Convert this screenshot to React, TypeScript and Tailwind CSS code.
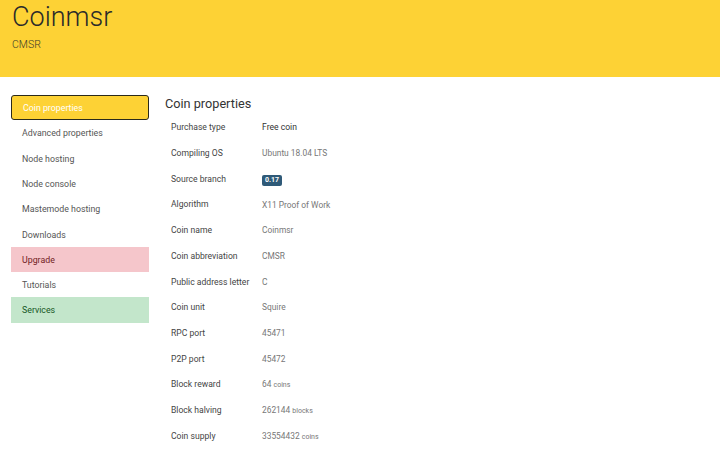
import React from "react";

const nav = [
  { t: "Coin properties", k: "active" },
  { t: "Advanced properties" },
  { t: "Node hosting" },
  { t: "Node console" },
  { t: "Mastemode hosting" },
  { t: "Downloads" },
  { t: "Upgrade", k: "danger" },
  { t: "Tutorials" },
  { t: "Services", k: "success" },
];

type Row = { l: string; v: React.ReactNode; dark?: boolean };

const rows: Row[] = [
  { l: "Purchase type", v: "Free coin", dark: true },
  { l: "Compiling OS", v: "Ubuntu 18.04 LTS" },
  {
    l: "Source branch",
    v: (
      <span className="inline-flex h-[11px] items-center rounded-[2px] bg-[#2f5a78] px-[3px] text-[7px] font-bold leading-none text-white">
        0.17
      </span>
    ),
  },
  { l: "Algorithm", v: "X11 Proof of Work" },
  { l: "Coin name", v: "Coinmsr" },
  { l: "Coin abbreviation", v: "CMSR" },
  { l: "Public address letter", v: "C" },
  { l: "Coin unit", v: "Squire" },
  { l: "RPC port", v: "45471" },
  { l: "P2P port", v: "45472" },
  { l: "Block reward", v: <>64 <span className="text-[7px]">coins</span></> },
  { l: "Block halving", v: <>262144 <span className="text-[7px]">blocks</span></> },
  { l: "Coin supply", v: <>33554432 <span className="text-[7px]">coins</span></> },
];

export default function App() {
  return (
    <div
      className="h-[450px] w-[720px] overflow-hidden bg-white"
      style={{ fontFamily: "Roboto, 'Noto Sans', sans-serif" }}
    >
      <header className="h-[77px] bg-[#fdd235] pl-[12px] pt-[1px]">
        <h1 className="text-[27px] font-light leading-[32px] text-[#2a2a2a]">Coinmsr</h1>
        <div className="mt-[6px] text-[10.5px] font-light leading-[12px] text-[#3a3a2a]">CMSR</div>
      </header>
      <div className="flex">
        <nav className="ml-[11px] mt-[18px] w-[138px]">
          {nav.map((n) => {
            let cls = "text-[#555]";
            if (n.k === "active")
              cls = "bg-[#fdd235] text-white border-[1.5px] border-[#2a2a1a] rounded-[3px]";
            if (n.k === "danger") cls = "bg-[#f5c6cb] text-[#721c24]";
            if (n.k === "success") cls = "bg-[#c3e6cb] text-[#155724]";
            return (
              <div
                key={n.t}
                className={`flex h-[25.3px] items-center pl-[11px] pt-[2px] text-[8.8px] ${cls}`}
              >
                {n.t}
              </div>
            );
          })}
        </nav>
        <main className="ml-[16px] mt-[17px] flex-1">
          <h2 className="text-[12.7px] leading-[20px] text-[#333]">Coin properties</h2>
          <div className="mt-[1px]">
            {rows.map((r) => (
              <div key={r.l} className="flex h-[25.7px] items-center">
                <div className="w-[97px] pl-[6px] text-[8.6px] text-[#444]">{r.l}</div>
                <div
                  className={
                    r.dark ? "text-[8.6px] text-[#333]" : "text-[8.4px] text-[#777]"
                  }
                >
                  {r.v}
                </div>
              </div>
            ))}
          </div>
        </main>
      </div>
    </div>
  );
}
